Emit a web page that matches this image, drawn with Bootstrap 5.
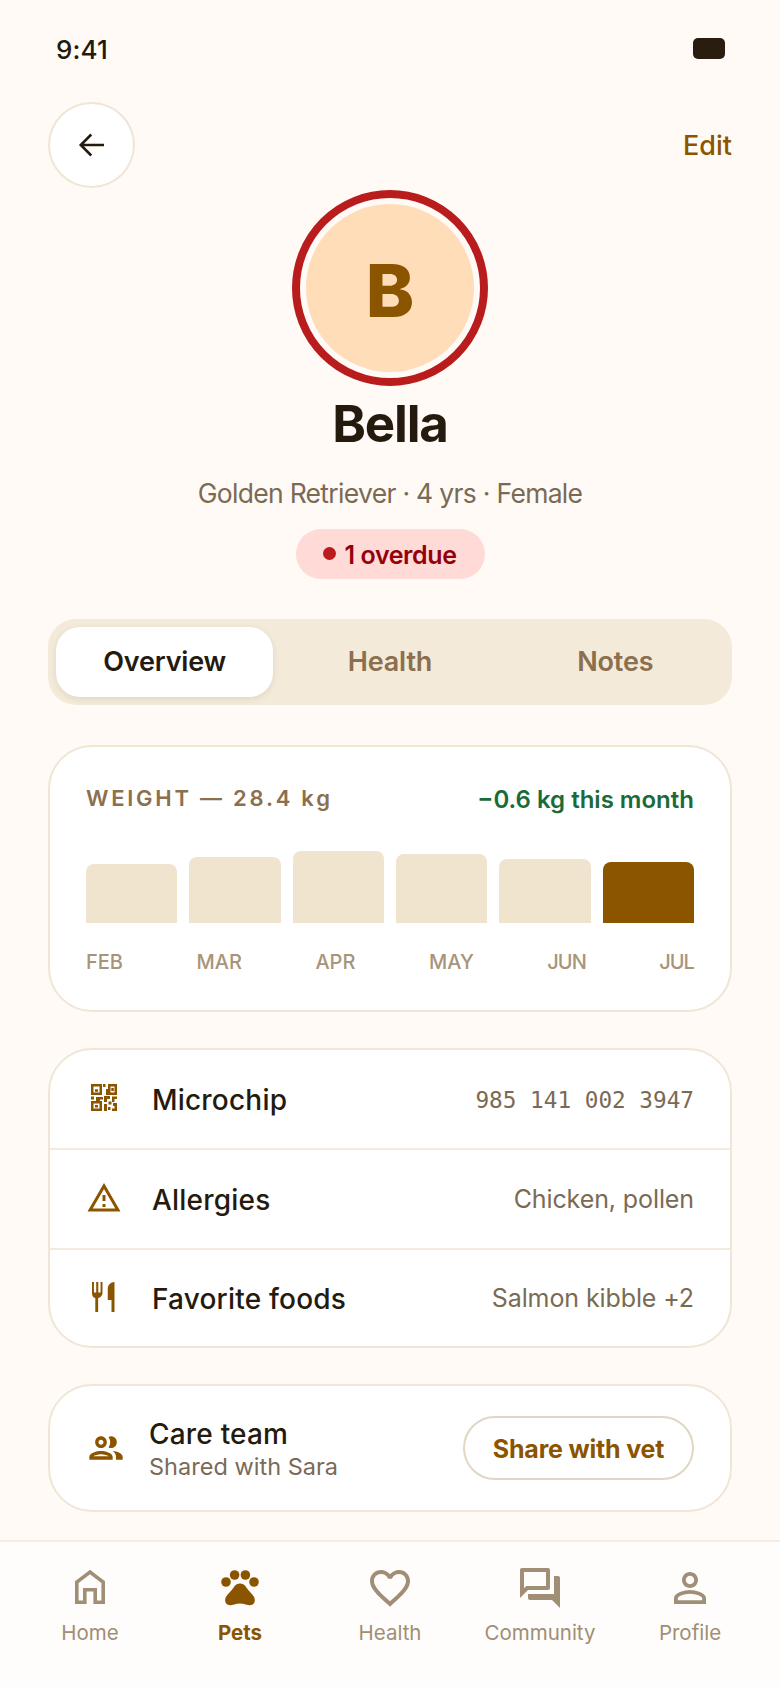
<!doctype html>
<html lang="en">
<head>
<meta charset="utf-8">
<title>Bella</title>
<link href="https://cdn.jsdelivr.net/npm/bootstrap@5.3.0/dist/css/bootstrap.min.css" rel="stylesheet">
<style>
html,body{margin:0;background:#FFFAF5}
body{font-family:Inter,"Liberation Sans",sans-serif;color:#241A0E}
.screen{width:780px;height:1688px;background:#FFFAF5}
.stat-bar{height:102px;padding:0 55px 6px 56px}
.clock{font-size:26px;font-weight:500;letter-spacing:.1px;margin-top:2px}
.batt{width:32px;height:21px;border-radius:5px;background:#2A1C0E}
.top-row{height:88px;padding:0 48px}
.back-btn{width:87px;height:86px;padding:0;border:2px solid #EFE6D6;background:#FFFFFF;border-radius:50%;color:#241A0E}
.edit-link{color:#8B5500;font-size:27px;font-weight:500;text-decoration:none;margin-top:24px}
.ring{width:196px;height:196px;border:8px solid #B91C1C;border-radius:50%;padding:6px}
.ava{width:100%;height:100%;border-radius:50%;background:#FFDDB8;color:#8B5500;font-size:73px;font-weight:800;line-height:1;padding-top:4px}
.pet-name{font-size:51px;font-weight:700;letter-spacing:-1.2px;line-height:60px;margin:8px 0 0}
.pet-sub{font-size:26.5px;color:#7A6A55;letter-spacing:-.7px;line-height:36px;margin:21px 0 0}
.pill-wrap{margin-top:18px}
.od-pill{height:50px;width:189px;background:#FFDAD6;color:#93000A;border-radius:25px;font-size:25px;font-weight:600;letter-spacing:-.4px;gap:8px}
.od-txt{padding-top:3px}
.od-dot{width:13px;height:13px;border-radius:50%;background:#B91C1C;margin-top:-2px}
.tabbar{margin:40px 48px 0;height:86px;padding:8px;gap:8px;background:#F3EAD9;border-radius:28px}
.tabbtn{flex:1 1 0;border-radius:24px;color:#8B6F4E;font-size:27px;font-weight:600;text-decoration:none;letter-spacing:-.2px}
.tabbtn.on{background:#fff;color:#241A0E;box-shadow:0 2px 6px rgba(60,40,10,.1)}
.panel{background:#fff;border:2px solid #EFE6D6;border-radius:44px;margin:0 48px}
.weight-panel{margin-top:40px;height:267px;padding:32px 36px 0}
.w-title{font-size:22px;font-weight:600;letter-spacing:2.75px;color:#8B6F4E}
.w-delta{font-size:24px;font-weight:600;letter-spacing:0;color:#1B6B3A;padding-top:3px}
.bars{height:72px;margin-top:33px;gap:12px}
.barcol{flex:1 1 0;background:#F0E4CE;border-radius:8px 8px 0 0}
.barcol.cur{background:#8B5500}
.months{margin-top:27px;font-size:20px;font-weight:500;color:#A89478;line-height:24px}
.m-tight{letter-spacing:-1px}
.info-panel{margin-top:36px;height:300px}
.info-row{height:100px;padding:0 36px;border-bottom:2px solid #F3EBDD}
.info-row:last-child{border-bottom:0;padding-bottom:4px}
.ic-box{width:36px;height:36px;margin:-3px 30px 0 0;color:#8B5500;flex:none}
.ic-box svg{display:block}
.info-lbl{font-size:28px;font-weight:500;letter-spacing:.2px;padding-top:2px}
.info-val{font-size:25px;color:#7A6A55;letter-spacing:-.1px;padding-top:2px}
.mono-val{font-family:"DejaVu Sans Mono",monospace;font-size:22.7px;letter-spacing:0;color:#7A6A55;padding-top:2px}
.care-panel{margin-top:36px;height:128px;padding:0 36px}
.care-ic{width:40px;height:40px;margin-right:23px;color:#8B5500;flex:none}
.care-ic svg{display:block}
.care-t{font-size:28px;font-weight:500;line-height:34px;letter-spacing:.2px;padding-top:3px}
.care-s{font-size:23.5px;color:#7A6A55;line-height:32px;letter-spacing:.02px}
.share-btn{width:231px;height:64px;border:2px solid #E0D6C4;background:#fff;border-radius:32px;color:#8B5500;font-size:25px;font-weight:700;letter-spacing:-.2px;padding:3px 0 0}
.foot-nav{margin-top:auto;height:148px;border-top:2px solid #F3EEE4;background:#FFFDFB;padding:22px 15px 0}
.foot-item{flex:1 1 0;color:#A08E76;font-size:20.5px;line-height:26px;text-decoration:none;font-weight:400}
.foot-item svg{display:block;margin-bottom:8px}
.foot-item.on{color:#8B5500;font-weight:700}
</style>
</head>
<body>
<div class="screen d-flex flex-column">
  <div class="stat-bar d-flex justify-content-between align-items-center">
    <span class="clock">9:41</span>
    <span class="batt"></span>
  </div>
  <div class="top-row d-flex justify-content-between align-items-start">
    <button class="back-btn d-flex align-items-center justify-content-center" aria-label="Back">
      <svg width="36" height="36" viewBox="0 0 24 24" fill="none" stroke="currentColor" stroke-width="1.7"><path d="M20 12H4.500M11.500 5l-7 7 7 7"/></svg>
    </button>
    <a class="edit-link" href="#">Edit</a>
  </div>
  <div class="d-flex justify-content-center">
    <div class="ring"><div class="ava d-flex align-items-center justify-content-center">B</div></div>
  </div>
  <h1 class="pet-name text-center">Bella</h1>
  <p class="pet-sub text-center">Golden Retriever · 4 yrs · Female</p>
  <div class="pill-wrap d-flex justify-content-center">
    <span class="od-pill d-inline-flex align-items-center justify-content-center"><span class="od-dot"></span><span class="od-txt">1 overdue</span></span>
  </div>
  <div class="tabbar d-flex">
    <a class="tabbtn on d-flex align-items-center justify-content-center" href="#">Overview</a>
    <a class="tabbtn d-flex align-items-center justify-content-center" href="#">Health</a>
    <a class="tabbtn d-flex align-items-center justify-content-center" href="#">Notes</a>
  </div>
  <section class="panel weight-panel">
    <div class="d-flex justify-content-between align-items-center">
      <span class="w-title">WEIGHT — 28.4 kg</span>
      <span class="w-delta">−0.6 kg this month</span>
    </div>
    <div class="bars d-flex align-items-end">
      <div class="barcol" style="height:59px"></div>
      <div class="barcol" style="height:66px"></div>
      <div class="barcol" style="height:72px"></div>
      <div class="barcol" style="height:69px"></div>
      <div class="barcol" style="height:64px"></div>
      <div class="barcol cur" style="height:61px"></div>
    </div>
    <div class="months d-flex justify-content-between">
      <span>FEB</span><span>MAR</span><span>APR</span><span>MAY</span><span class="m-tight">JUN</span><span class="m-tight">JUL</span>
    </div>
  </section>
  <section class="panel info-panel overflow-hidden">
    <div class="info-row d-flex align-items-center">
      <span class="ic-box">
        <svg width="36" height="36" viewBox="0 0 36 36" fill="currentColor"><path fill-rule="evenodd" d="M5 4h11v11H5zM7.500 6.500v6h6v-6zM22 4h9v11H20V9h2zM24.500 6.500v6h4v-6zM17 4h2.500v3H17zM5 21h11v10H5zM7.500 23.500v5h6v-5z"/><path d="M9 9.200h3v2.500H9zM25.300 8h2.500v3h-2.500zM9 25h3v2.500H9zM5 16.500h3v3H5zM10 17h7v2.500h-3V21h-4zM18 16h6v3h-3v3h-3zM26 16.500h5v2.500h-2.500v3H26zM18 24h3v7h-3zM22.500 21.500h3v3h-3zM27 23h4v8h-5v-2.500h2.500V26H27zM22 27h2.500v3H22z"/></svg>
      </span>
      <span class="info-lbl flex-grow-1">Microchip</span>
      <span class="mono-val">985 141 002 3947</span>
    </div>
    <div class="info-row d-flex align-items-center">
      <span class="ic-box">
        <svg width="36" height="36" viewBox="0 0 24 24" fill="currentColor"><path d="M12 5.990 19.530 19H4.470L12 5.990M12 2 1 21h22L12 2zm1 14h-2v2h2v-2zm0-6h-2v4h2v-4z"/></svg>
      </span>
      <span class="info-lbl flex-grow-1">Allergies</span>
      <span class="info-val">Chicken, pollen</span>
    </div>
    <div class="info-row d-flex align-items-center">
      <span class="ic-box">
        <svg width="36" height="36" viewBox="0 0 24 24" fill="currentColor"><path d="M4 2h1.300v7h1.500V2h1.400v7h1.500V2H11v7.300c0 1.700-1.300 3.100-2.900 3.300V22H6.200v-9.400C4.500 12.400 4 11 4 9.300zM14.500 6.500C14.500 4 16.500 2 19 2v20h-2v-8h-2.500z"/></svg>
      </span>
      <span class="info-lbl flex-grow-1">Favorite foods</span>
      <span class="info-val">Salmon kibble +2</span>
    </div>
  </section>
  <section class="panel care-panel d-flex align-items-center">
    <span class="care-ic">
      <svg width="40" height="40" viewBox="0 0 24 24" fill="currentColor"><path d="M9 13.750c-2.340 0-7 1.170-7 3.500V19h14v-1.750c0-2.330-4.660-3.500-7-3.500zM4.340 17c.84-.58 2.870-1.250 4.660-1.250s3.820.67 4.660 1.250H4.340zM9 12c1.930 0 3.500-1.570 3.500-3.500S10.930 5 9 5 5.500 6.570 5.500 8.500 7.070 12 9 12zm0-5c.83 0 1.500.67 1.500 1.500S9.830 10 9 10s-1.500-.67-1.500-1.500S8.170 7 9 7zm7.040 6.810c1.160.84 1.960 1.960 1.960 3.440V19h4v-1.750c0-2.020-3.500-3.170-5.960-3.440zM15 12c1.930 0 3.500-1.570 3.500-3.500S16.930 5 15 5c-.54 0-1.040.13-1.500.35.630.89 1 1.980 1 3.150s-.37 2.260-1 3.150c.46.22.96.35 1.500.35z"/></svg>
    </span>
    <div class="flex-grow-1">
      <div class="care-t">Care team</div>
      <div class="care-s">Shared with Sara</div>
    </div>
    <button class="share-btn">Share with vet</button>
  </section>
  <nav class="foot-nav d-flex">
    <a class="foot-item d-flex flex-column align-items-center" href="#">
      <svg width="48" height="48" viewBox="0 0 24 24" fill="none" stroke="currentColor" stroke-width="1.800"><path d="M5.400 19.100V9.100L12 4l6.600 5.100v10h-4v-6.200H9.400v6.200z"/></svg>Home</a>
    <a class="foot-item on d-flex flex-column align-items-center" href="#">
      <svg width="48" height="48" viewBox="0 0 24 24" fill="currentColor"><circle cx="5" cy="9" r="2.400"/><circle cx="9.300" cy="5.500" r="2.400"/><circle cx="14.700" cy="5.500" r="2.400"/><circle cx="19" cy="9" r="2.400"/><path d="M12 9.700c-1.400 0-2.400.8-3.200 2-.9 1.400-2.700 3-3.700 4.600-.9 1.600-.6 3.300.6 4 1 .6 2.200.4 3.400 0 1-.3 1.900-.5 2.900-.5s1.900.2 2.900.5c1.200.4 2.400.6 3.400 0 1.200-.7 1.500-2.400.6-4-1-1.600-2.800-3.200-3.700-4.600-.8-1.200-1.800-2-3.200-2z"/></svg>Pets</a>
    <a class="foot-item d-flex flex-column align-items-center" href="#">
      <svg width="48" height="48" viewBox="0 0 24 24" fill="currentColor"><path d="M16.500 3c-1.740 0-3.410.81-4.500 2.090C10.910 3.810 9.240 3 7.500 3 4.420 3 2 5.420 2 8.500c0 3.780 3.400 6.860 8.550 11.540L12 21.350l1.450-1.320C18.600 15.360 22 12.280 22 8.500 22 5.420 19.580 3 16.500 3zm-4.400 15.550-.1.100-.1-.1C7.140 14.240 4 11.390 4 8.500 4 6.500 5.500 5 7.500 5c1.540 0 3.040.99 3.570 2.360h1.870C13.460 5.990 14.960 5 16.500 5c2 0 3.500 1.500 3.500 3.500 0 2.890-3.140 5.740-7.900 10.050z"/></svg>Health</a>
    <a class="foot-item d-flex flex-column align-items-center" href="#">
      <svg width="48" height="48" viewBox="0 0 24 24" fill="currentColor"><path d="M15 4v7H5.170L4 12.170V4h11m1-2H3c-.55 0-1 .45-1 1v14l4-4h10c.55 0 1-.45 1-1V3c0-.55-.45-1-1-1zm5 4h-2v9H6v2c0 .55.45 1 1 1h11l4 4V7c0-.55-.45-1-1-1z"/></svg>Community</a>
    <a class="foot-item d-flex flex-column align-items-center" href="#">
      <svg width="48" height="48" viewBox="0 0 24 24" fill="currentColor"><path d="M12 5.900c1.160 0 2.100.94 2.100 2.100s-.94 2.100-2.100 2.100S9.900 9.160 9.900 8s.94-2.100 2.100-2.100m0 9c2.970 0 6.100 1.460 6.100 2.100v1.100H5.900V17c0-.64 3.130-2.100 6.100-2.100M12 4C9.790 4 8 5.790 8 8s1.790 4 4 4 4-1.790 4-4-1.790-4-4-4zm0 9c-2.670 0-8 1.340-8 4v3h16v-3c0-2.660-5.330-4-8-4z"/></svg>Profile</a>
  </nav>
</div>
<script src="https://cdn.jsdelivr.net/npm/bootstrap@5.3.0/dist/js/bootstrap.bundle.min.js"></script>
</body>
</html>
